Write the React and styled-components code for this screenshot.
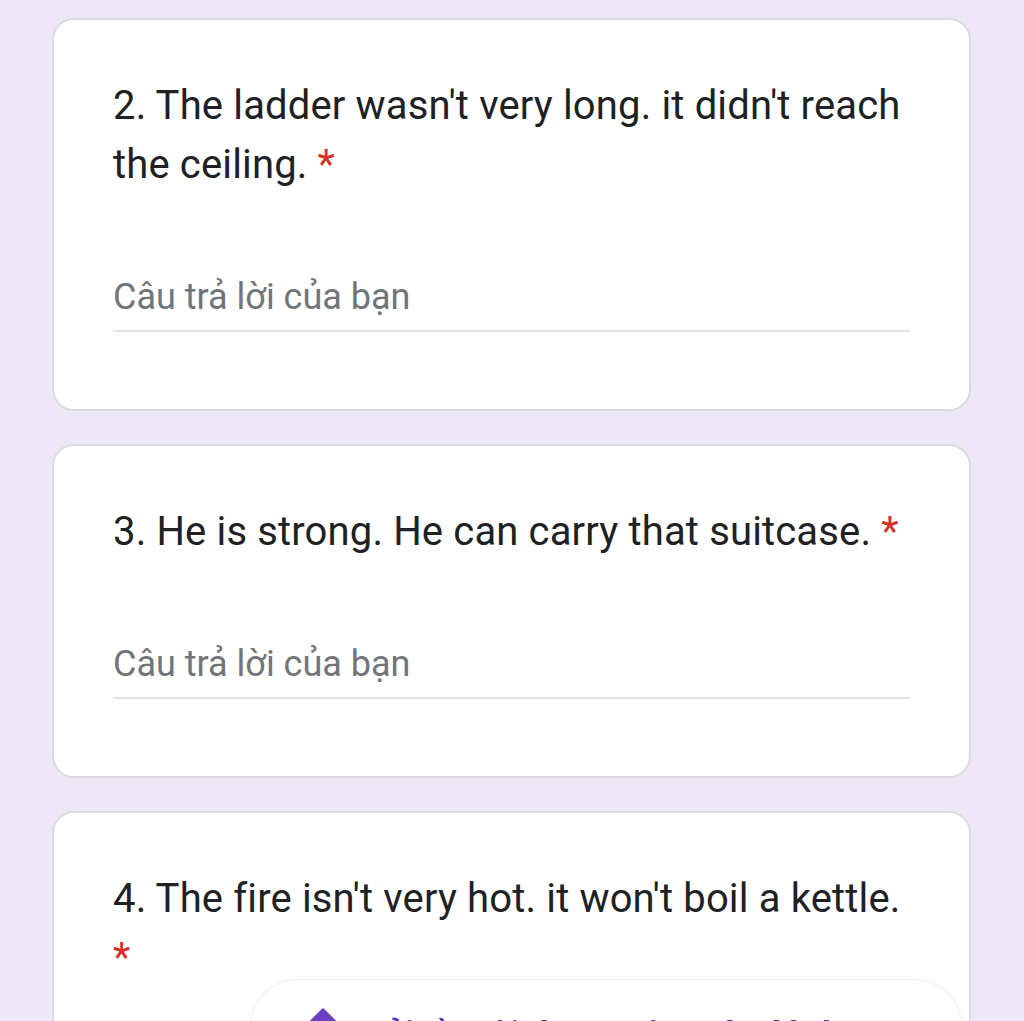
import React from "react";
import styled, { createGlobalStyle } from "styled-components";

const GlobalStyle = createGlobalStyle`
  html, body {
    margin: 0;
    padding: 0;
    background: #ede8f7;
    overflow: hidden;
  }
  body {
    font-family: Roboto, "Noto Sans", Arial, sans-serif;
  }
`;

const questions = [
    { id: 2, text: "2. The ladder wasn't very long. it didn't reach the ceiling." },
    { id: 3, text: "3. He is strong. He can carry that suitcase." },
    { id: 4, text: "4. The fire isn't very hot. it won't boil a kettle." },
];

function QuestionCard({ text }) {
    return (
        <Card>
            <QuestionTitle>
                {text} <Required>*</Required>
            </QuestionTitle>
            <AnswerField>
                <Placeholder>Câu trả lời của bạn</Placeholder>
            </AnswerField>
        </Card>
    );
}

function App() {
    return (
        <>
            <GlobalStyle />
            <Page>
                {questions.map((q) => (
                    <QuestionCard key={q.id} text={q.text} />
                ))}
            </Page>
            <FloatingChip>
                <Sparkle viewBox="0 0 24 24">
                    <path d="M12 1.5 L22.5 12 L12 22.5 L1.5 12 Z" />
                </Sparkle>
                <ChipLabel>Hỏi về nội dung trên màn hình</ChipLabel>
            </FloatingChip>
        </>
    );
}

const Page = styled.main`
  display: flex;
  flex-direction: column;
  gap: 33px;
  padding: 18px 53px 0 52px;
`;

const Card = styled.section`
  background: #fff;
  border: 2px solid #dcd9e3;
  border-radius: 22px;
  padding: 56px 59px 77px;
`;

const QuestionTitle = styled.div`
  font-size: 40px;
  line-height: 59px;
  color: #202124;
  letter-spacing: 0.15px;
`;

const Required = styled.span`
  color: #d93025;
`;

const AnswerField = styled.div`
  margin-top: 82px;
  padding-bottom: 12px;
  border-bottom: 2px solid #e3e3e3;
`;

const Placeholder = styled.div`
  font-size: 36px;
  line-height: 42px;
  color: #70757a;
`;

const FloatingChip = styled.div`
  position: fixed;
  left: 250px;
  top: 979px;
  width: 712px;
  height: 110px;
  box-sizing: border-box;
  background: #fff;
  border: 1px solid #f0eff2;
  border-radius: 48px;
  box-shadow: 0 0 6px rgba(0, 0, 0, 0.04);
  display: flex;
  align-items: flex-start;
  gap: 22px;
  padding: 28px 0 0 58px;
`;

const Sparkle = styled.svg`
  width: 28px;
  height: 28px;
  fill: #6a3fc1;
  stroke: #6a3fc1;
  stroke-width: 2.5;
  stroke-linejoin: round;
  flex-shrink: 0;
`;

const ChipLabel = styled.span`
  margin-top: 8px;
  font-size: 36px;
  line-height: 40px;
  font-weight: 700;
  color: #5b34b8;
  white-space: nowrap;
`;

export default App;
